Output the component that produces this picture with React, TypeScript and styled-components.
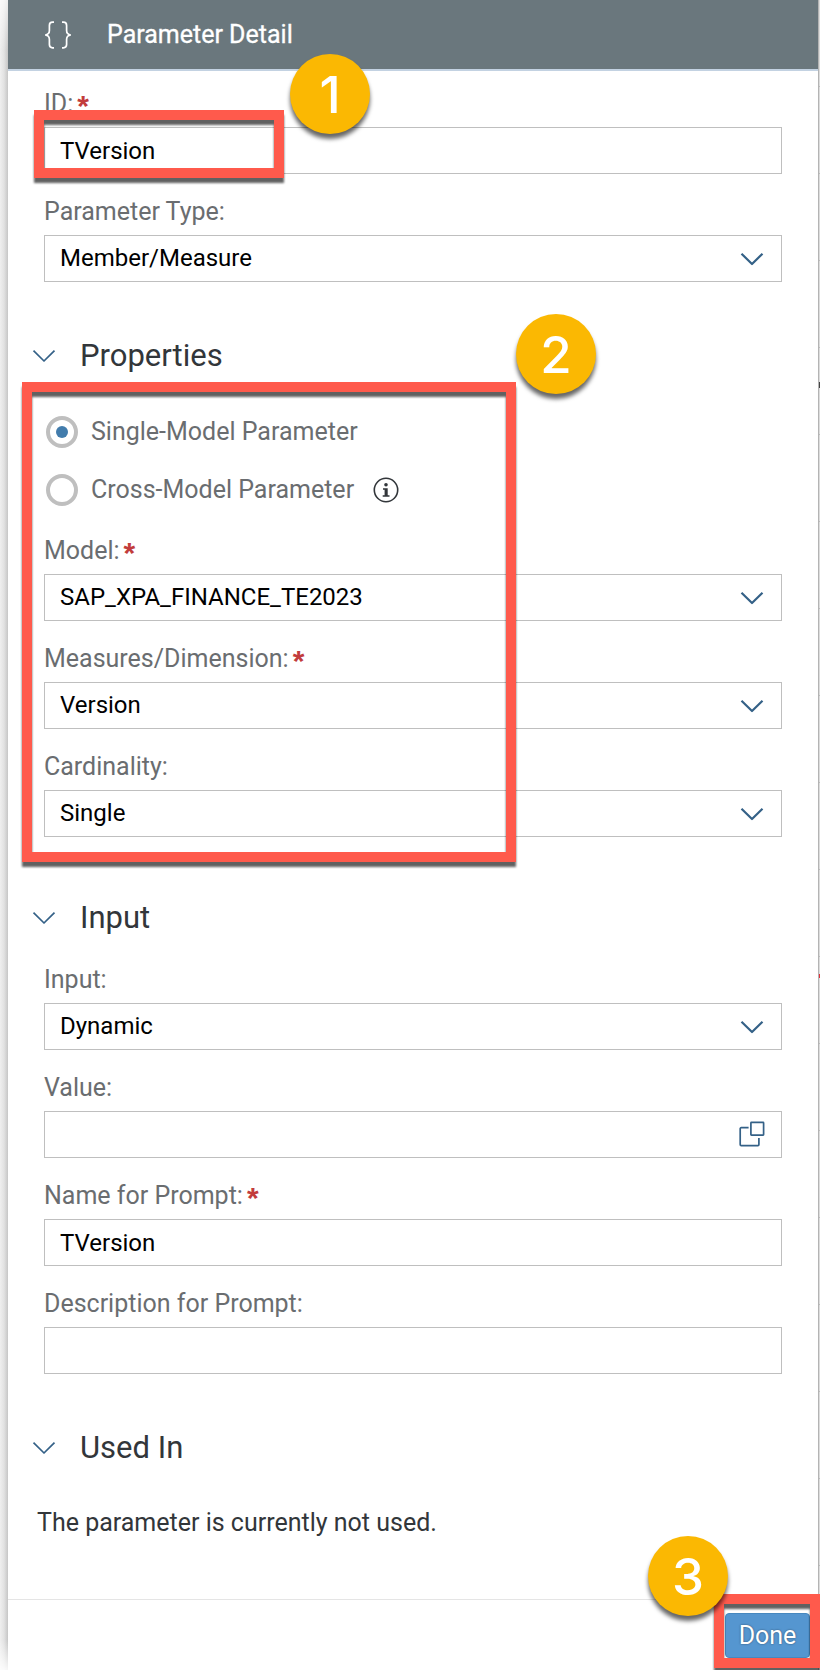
import React, { useState } from 'react';
import styled, { createGlobalStyle } from 'styled-components';

const GlobalStyle = createGlobalStyle`
  *, *::before, *::after { box-sizing: border-box; }
  body {
    margin: 0;
    background: #fff;
    color: #32363a;
    font-family: Roboto, "Noto Sans", sans-serif;
    font-size: 25px;
    line-height: 32px;
  }
  button, input, select { font: inherit; }
`;

const Page = styled.div`
  display: flex;
  min-height: 100vh;
`;

const LeftEdge = styled.div`
  flex: none;
  width: 8px;
  background: linear-gradient(to right, #efefef, #e2e2e2 50%, #c6c6c6);
  mask-image: linear-gradient(to bottom, rgba(0, 0, 0, 0.3), #000 50px, #000 calc(100% - 30px), rgba(0, 0, 0, 0.15));
`;

const RightEdge = styled.div`
  flex: none;
  width: 2px;
  background:
    linear-gradient(#444, #444) 0 382px / 2px 6px no-repeat,
    linear-gradient(#e0303a, #e0303a) 0 974px / 2px 4px no-repeat,
    repeating-linear-gradient(to bottom, #dcdcdc 0 86px, #bdbdbd 86px 87px);
  border-left: 1px solid #b4b4b4;
`;

const Panel = styled.main`
  flex: 1;
  min-width: 0;
  display: flex;
  flex-direction: column;
`;

const Header = styled.header`
  display: flex;
  align-items: center;
  gap: 35px;
  height: 71px;
  padding: 0 36px;
  background: #6a777d;
  border-bottom: 2px solid #c3d2e2;
  color: #fff;
`;

const Title = styled.h1`
  margin: 0;
  font-size: 25px;
  font-weight: 400;
  -webkit-text-stroke: 0.3px #fff;
`;

const Body = styled.div`
  flex: 1;
  padding: 17px 36px 60px;
`;

const Fields = styled.div`
  position: relative;
  display: flex;
  flex-direction: column;
  gap: 22px;
`;

const FieldRow = styled.div`
  position: relative;
  display: flex;
  flex-direction: column;
  gap: 7px;
`;

const Label = styled.label`
  height: 32px;
  color: #6a6d70;
`;

const Star = styled.span`
  margin-left: 4px;
  color: #c23c3c;
  font-family: "Liberation Sans", sans-serif;
  font-size: 30px;
  font-weight: 700;
  line-height: 24px;
  vertical-align: -4px;
`;

const Box = styled.div`
  display: flex;
  align-items: center;
  position: relative;
  height: 47px;
  border: 1px solid #bfbfbf;
  background: #fff;
  color: #346187;
`;

const TextInput = styled.input`
  flex: 1;
  min-width: 0;
  height: 100%;
  padding: 0 15px;
  border: 0;
  background: transparent;
  color: #000;
  font-size: 24px;
  outline-offset: 2px;
`;

const Select = styled.select`
  flex: 1;
  min-width: 0;
  height: 100%;
  padding: 0 60px 2px 15px;
  border: 0;
  appearance: none;
  background: transparent;
  color: #000;
  font-size: 24px;
`;

const SelectArrow = styled.span`
  position: absolute;
  right: 17px;
  display: flex;
  pointer-events: none;
`;

const IconButton = styled.button`
  display: flex;
  align-items: center;
  padding: 0 16px 2px;
  border: 0;
  background: none;
  color: inherit;
`;

const Section = styled.section<{ $top: number }>`
  padding-top: ${(p) => p.$top}px;
`;

const SectionToggle = styled.button`
  display: flex;
  align-items: center;
  gap: 24px;
  margin-left: -12px;
  padding: 0;
  border: 0;
  background: none;
  color: #346187;
`;

const SectionTitle = styled.h2`
  margin: 0;
  color: #32363a;
  font-size: 31px;
  font-weight: 400;
  line-height: 40px;
`;

const SectionBody = styled.div<{ $top: number }>`
  position: relative;
  padding-top: ${(p) => p.$top}px;
`;

const RadioList = styled.div`
  display: flex;
  flex-direction: column;
  gap: 26px;
  padding-bottom: 29px;
`;

const RadioRow = styled.div`
  display: flex;
  align-items: center;
  gap: 19px;
  padding-left: 2px;
`;

const RadioLabel = styled.label`
  display: flex;
  align-items: center;
  gap: 13px;
  color: #6a6d70;
`;

const Radio = styled.input`
  appearance: none;
  display: grid;
  place-items: center;
  width: 32px;
  height: 32px;
  margin: 0;
  border: 4px solid #bfbfbf;
  border-radius: 50%;
  background: #fff;

  &:checked::before {
    content: "";
    width: 12px;
    height: 12px;
    border-radius: 50%;
    background: #427cac;
  }
`;

const InfoButton = styled.button`
  display: flex;
  padding: 0;
  border: 0;
  background: none;
  color: #32363a;
`;

const Note = styled.p`
  margin: 0 0 0 -7px;
`;

const Footer = styled.footer`
  display: flex;
  justify-content: flex-end;
  padding: 13px 8px 12px;
  border-top: 1px solid #e5e5e5;
`;

const DoneSlot = styled.div`
  position: relative;
`;

const DoneButton = styled.button`
  display: block;
  width: 85px;
  height: 45px;
  padding: 0;
  border: 1px solid #4788bf;
  border-radius: 4px;
  background: #5596d0;
  color: #fff;
  text-shadow: 0 0 2px rgba(0, 0, 0, 0.5);
`;

const Frame = styled.div<{ $top: number; $left: number; $width: number; $height: number }>`
  position: absolute;
  z-index: 1;
  top: ${(p) => p.$top}px;
  left: ${(p) => p.$left}px;
  width: ${(p) => p.$width}px;
  height: ${(p) => p.$height}px;
  border: 10px solid #ff5a4c;
  filter: drop-shadow(0 5px 1px rgba(0, 0, 0, 0.62));
  pointer-events: none;
`;

const Step = styled.span<{ $top: number; $left: number }>`
  position: absolute;
  z-index: 2;
  top: ${(p) => p.$top}px;
  left: ${(p) => p.$left}px;
  display: grid;
  place-items: center;
  width: 80px;
  height: 80px;
  padding-top: 2px;
  border-radius: 50%;
  background: #fbb802;
  box-shadow: 0 5px 4px rgba(0, 0, 0, 0.6);
  color: #fff;
  font-family: Inter, sans-serif;
  font-size: 51px;
  font-weight: 500;
  line-height: 78px;
  pointer-events: none;
`;

const BracesIcon = () => (
  <svg width="28" height="28" viewBox="0 0 28 28" fill="none" stroke="currentColor" strokeWidth="1.7" aria-hidden="true">
    <path d="M10 1.2H8.6C6.3 1.2 5.4 2.3 5.4 4.4v5.2c0 2.4-1 4-4.2 4.4 3.200.4 4.2 2 4.2 4.4v5.2c0 2.1.9 3.2 3.2 3.2H10" />
    <path d="M18 1.2h1.4c2.3 0 3.2 1.1 3.2 3.2v5.2c0 2.4 1 4 4.2 4.4-3.2.4-4.2 2-4.2 4.4v5.2c0 2.1-.9 3.2-3.2 3.2H18" />
  </svg>
);

const Chevron = ({ weight }: { weight: number }) => (
  <svg width="24" height="14" viewBox="0 0 24 14" fill="none" stroke="currentColor" strokeWidth={weight} aria-hidden="true">
    <path d="M1.5 1.7L12 12 22.5 1.7" strokeLinejoin="round" />
  </svg>
);

const ValueHelpIcon = () => (
  <svg width="26" height="26" viewBox="0 0 26 26" fill="none" stroke="currentColor" strokeWidth="1.7" strokeLinejoin="round" aria-hidden="true">
    <rect x="11.9" y="1.4" width="12.7" height="12.7" rx="0.5" />
    <path d="M9.6 6.7H2.2a1 1 0 0 0-1 1v15.9a1 1 0 0 0 1 1h16.7a1 1 0 0 0 1-1v-6.6" />
  </svg>
);

const InfoIcon = () => (
  <svg width="26" height="26" viewBox="0 0 26 26" fill="none" aria-hidden="true">
    <circle cx="13" cy="13" r="11.7" stroke="currentColor" strokeWidth="1.6" />
    <circle cx="13" cy="7.8" r="1.8" fill="currentColor" />
    <path d="M10 11.2h4.7v7h1.8v1.6H9.7v-1.6h1.9v-5.4H10z" fill="currentColor" />
  </svg>
);

type FieldProps = { id: string; label: string; required?: boolean; children: React.ReactNode; marks?: React.ReactNode };

const Field = ({ id, label, required, children, marks }: FieldProps) => (
  <FieldRow>
    <Label htmlFor={id}>
      {label}
      {required && <Star>*</Star>}
    </Label>
    <Box>{children}</Box>
    {marks}
  </FieldRow>
);

const SelectField = ({ id, label, required, value }: { id: string; label: string; required?: boolean; value: string }) => (
  <Field id={id} label={label} required={required}>
    <Select id={id} defaultValue={value}>
      <option>{value}</option>
    </Select>
    <SelectArrow>
      <Chevron weight={2.2} />
    </SelectArrow>
  </Field>
);

const SectionHeading = ({ children }: { children: React.ReactNode }) => (
  <SectionToggle type="button" aria-expanded="true">
    <Chevron weight={1.7} />
    <SectionTitle>{children}</SectionTitle>
  </SectionToggle>
);

export default function App() {
  const [scope, setScope] = useState('single');

  return (
    <>
      <GlobalStyle />
      <Page>
        <LeftEdge />
        <Panel>
          <Header>
            <BracesIcon />
            <Title>Parameter Detail</Title>
          </Header>
          <Body>
            <Fields>
              <Field
                id="param-id"
                label="ID:"
                required
                marks={
                  <>
                    <Frame $top={22} $left={-10} $width={250} $height={68} />
                    <Step $top={-34} $left={246}>1</Step>
                  </>
                }
              >
                <TextInput id="param-id" defaultValue="TVersion" />
              </Field>
              <SelectField id="param-type" label="Parameter Type:" value="Member/Measure" />
            </Fields>

            <Section $top={54}>
              <SectionHeading>Properties</SectionHeading>
              <SectionBody $top={40}>
                <RadioList role="radiogroup" aria-label="Parameter scope">
                  <RadioRow>
                    <RadioLabel>
                      <Radio type="radio" name="scope" checked={scope === 'single'} onChange={() => setScope('single')} />
                      Single-Model Parameter
                    </RadioLabel>
                  </RadioRow>
                  <RadioRow>
                    <RadioLabel>
                      <Radio type="radio" name="scope" checked={scope === 'cross'} onChange={() => setScope('cross')} />
                      Cross-Model Parameter
                    </RadioLabel>
                    <InfoButton type="button" aria-label="More information">
                      <InfoIcon />
                    </InfoButton>
                  </RadioRow>
                </RadioList>
                <Fields>
                  <SelectField id="model" label="Model:" required value="SAP_XPA_FINANCE_TE2023" />
                  <SelectField id="dimension" label="Measures/Dimension:" required value="Version" />
                  <SelectField id="cardinality" label="Cardinality:" value="Single" />
                </Fields>
                <Frame $top={6} $left={-22} $width={494} $height={480} />
                <Step $top={-62} $left={472}>2</Step>
              </SectionBody>
            </Section>

            <Section $top={61}>
              <SectionHeading>Input</SectionHeading>
              <SectionBody $top={26}>
                <Fields>
                  <SelectField id="input-mode" label="Input:" value="Dynamic" />
                  <Field id="value" label="Value:">
                    <TextInput id="value" />
                    <IconButton type="button" aria-label="Open value help">
                      <ValueHelpIcon />
                    </IconButton>
                  </Field>
                  <Field id="prompt-name" label="Name for Prompt:" required>
                    <TextInput id="prompt-name" defaultValue="TVersion" />
                  </Field>
                  <Field id="prompt-description" label="Description for Prompt:">
                    <TextInput id="prompt-description" />
                  </Field>
                </Fields>
              </SectionBody>
            </Section>

            <Section $top={54}>
              <SectionHeading>Used In</SectionHeading>
              <SectionBody $top={39}>
                <Note>The parameter is currently not used.</Note>
              </SectionBody>
            </Section>
          </Body>
          <Footer>
            <DoneSlot>
              <DoneButton type="button">Done</DoneButton>
              <Frame $top={-19} $left={-11} $width={106} $height={74} />
              <Step $top={-77} $left={-77}>3</Step>
            </DoneSlot>
          </Footer>
        </Panel>
        <RightEdge />
      </Page>
    </>
  );
}
